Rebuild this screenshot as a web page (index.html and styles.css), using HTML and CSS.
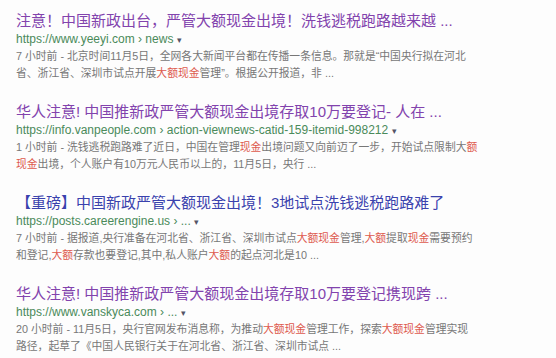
FILE: index.html
```html
<!DOCTYPE html>
<html lang="zh-CN">
<head>
  <meta charset="UTF-8" />
  <title>搜索结果</title>
  <link rel="stylesheet" href="styles.css">
</head>
<body>
  <div id="results">
    <div class="result">
      <a class="title visited" href="#">注意！中国新政出台，严管大额现金出境！洗钱逃税跑路越来越 ...</a>
      <div class="url">https://www.yeeyi.com › news <span class="arrow">▾</span></div>
      <div class="snippet">7 小时前 - 北京时间11月5日，全网各大新闻平台都在传播一条信息。那就是“中国央行拟在河北<br>省、浙江省、深圳市试点开展<em>大额现金</em>管理”。根据公开报道，非 ...</div>
    </div>

    <div class="result">
      <a class="title visited" href="#">华人注意! 中国推新政严管大额现金出境存取10万要登记- 人在 ...</a>
      <div class="url">https://info.vanpeople.com › action-viewnews-catid-159-itemid-998212 <span class="arrow">▾</span></div>
      <div class="snippet">1 小时前 - 洗钱逃税跑路难了近日，中国在管理<em>现金</em>出境问题又向前迈了一步，开始试点限制大<em>额</em><br><em>现金</em>出境，个人账户有10万元人民币以上的，11月5日，央行 ...</div>
    </div>

    <div class="result">
      <a class="title" href="#">【重磅】中国新政严管大额现金出境！3地试点洗钱逃税跑路难了</a>
      <div class="url">https://posts.careerengine.us › ... <span class="arrow">▾</span></div>
      <div class="snippet">7 小时前 - 据报道,央行准备在河北省、浙江省、深圳市试点<em>大额现金</em>管理,<em>大额</em>提取<em>现金</em>需要预约<br>和登记,<em>大额</em>存款也要登记,其中,私人账户<em>大额</em>的起点河北是10 ...</div>
    </div>

    <div class="result">
      <a class="title visited" href="#">华人注意! 中国推新政严管大额现金出境存取10万要登记携现跨 ...</a>
      <div class="url">https://www.vanskyca.com › ... <span class="arrow">▾</span></div>
      <div class="snippet">20 小时前 - 11月5日，央行官网发布消息称，为推动<em>大额现金</em>管理工作，探索<em>大额现金</em>管理实现<br>路径，起草了《中国人民银行关于在河北省、浙江省、深圳市试点 ...</div>
    </div>
  </div>
</body>
</html>
```

FILE: styles.css
```css
body {
  margin: 0;
  background-color: #fdfdfd;
  font-family: "Liberation Sans", Arial, "Noto Sans CJK SC", sans-serif;
}

#results {
  padding: 11px 0 0 16px;
}

.result {
  margin-bottom: 21px;
}

.title {
  display: block;
  font-size: 15px;
  line-height: 20px;
  color: #3a42ad;
  text-decoration: none;
  white-space: nowrap;
}

.title.visited {
  color: #8243ad;
}

.url {
  font-size: 12px;
  line-height: 16px;
  color: #4a8a5a;
  white-space: nowrap;
}

.arrow {
  font-size: 9px;
  color: #556;
}

.snippet {
  font-size: 10.8px;
  line-height: 16.5px;
  color: #777;
  white-space: nowrap;
}

.snippet em {
  font-style: normal;
  color: #dd5a4e;
}
```
